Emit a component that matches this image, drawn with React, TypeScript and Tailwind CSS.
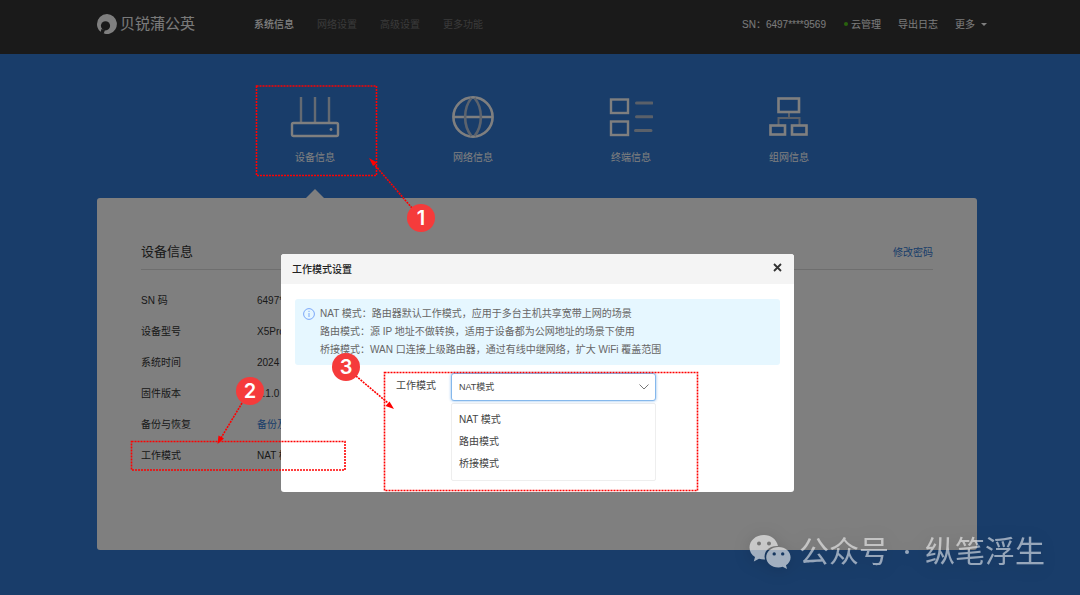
import React from "react";

const navItems = ["网络设置", "高级设置", "更多功能"];

function RouterIcon() {
  return (
    <svg width="50" height="42" viewBox="0 0 50 42" fill="none" stroke="#fff">
      <path d="M11 1v25M25 1v25M39 1v25" stroke="#c8d4e4" strokeWidth="2.4" />
      <rect x="2" y="27" width="46" height="13" rx="1.5" strokeWidth="2.4" />
      <circle cx="41" cy="33.5" r="1.4" fill="#fff" stroke="none" />
    </svg>
  );
}

function GlobeIcon() {
  return (
    <svg width="42" height="42" viewBox="0 0 42 42" fill="none" stroke="#fff" strokeWidth="2.6">
      <circle cx="21" cy="21" r="19.6" />
      <path d="M1 21h40" />
      <path d="M19.500 2C11 12 11 30 19.500 40M22.500 2C31 12 31 30 22.500 40" stroke="#b9c7db" />
    </svg>
  );
}

function TerminalIcon() {
  return (
    <svg width="44" height="42" viewBox="0 0 44 42" fill="none" stroke="#fff" strokeWidth="2.4">
      <rect x="2" y="3.500" width="17" height="13.500" />
      <rect x="2" y="25.500" width="17" height="13.500" />
      <path d="M27.500 7h15.500M27.500 20.800h15.500M26.500 34.500h15.500" strokeLinecap="round" strokeWidth="3" stroke="#b4c0d2" />
    </svg>
  );
}

function NetworkIcon() {
  return (
    <svg width="40" height="42" viewBox="0 0 40 42" fill="none" stroke="#fff" strokeWidth="2.6">
      <path d="M20 16v6M9.500 29v-7h21v7" stroke="#b4c0d2" strokeWidth="2" />
      <rect x="9.500" y="2.500" width="20.500" height="13.500" />
      <rect x="1.500" y="29.500" width="14.500" height="9" />
      <rect x="23" y="29.500" width="14.500" height="9" />
    </svg>
  );
}

const tabs = [
  { label: "设备信息", Icon: RouterIcon },
  { label: "网络信息", Icon: GlobeIcon },
  { label: "终端信息", Icon: TerminalIcon },
  { label: "组网信息", Icon: NetworkIcon },
];

const rows = [
  { label: "SN 码", value: "6497****9569" },
  { label: "设备型号", value: "X5Pro" },
  { label: "系统时间", value: "2024" },
  { label: "固件版本", value: "1.1.0" },
  { label: "备份与恢复", value: "备份及恢复", link: true },
  { label: "工作模式", value: "NAT 模式" },
];

function Header() {
  return (
    <header className="h-[54px] bg-[#343434] pr-[6px] text-[10px] text-[#f4f4f4]">
      <div className="mx-auto flex h-full max-w-[880px] items-center pb-1.5">
        <a href="#" className="flex items-center gap-[3px]">
          <svg width="20" height="20" viewBox="0 0 20 20">
            <path
              d="M10 0a10 10 0 0 1 3 19.500C10 20.500 7.500 19.800 6.500 19C8 18.700 8.200 17.500 7.200 16.400A5 5 0 1 1 13.300 11.500C13.300 15 11 17.500 7 19.500C2.500 18 0 14.500 0 10A10 10 0 0 1 10 0Z"
              fill="#fff"
            />
            <circle cx="8.500" cy="11.800" r="4.600" fill="#343434" />
            <path d="M4.500 15L3.500 18.500L6.500 20L8 16Z" fill="#343434" />
          </svg>
          <span className="text-[15px] leading-5">贝锐蒲公英</span>
        </a>
        <nav className="ml-[59px] flex gap-[23px]">
          <a href="#" className="font-medium text-white">系统信息</a>
          {navItems.map((n) => (
            <a key={n} href="#" className="text-[#747474]">{n}</a>
          ))}
        </nav>
        <div className="mr-[-10px] ml-auto flex items-center">
          <span className="mr-[18px]">SN：6497****9569</span>
          <a href="#" className="mr-[17px] flex items-center gap-[3px]">
            <span className="size-1 rounded-full bg-[#52c41a]" />
            云管理
          </a>
          <a href="#" className="mr-[17px]">导出日志</a>
          <button className="flex items-center gap-1.5">
            更多
            <span className="border-x-[3px] border-t-[3px] border-x-transparent border-t-white" />
          </button>
        </div>
      </div>
    </header>
  );
}

function Modal() {
  return (
    <div className="absolute inset-0 flex items-start justify-center bg-black/50 pt-[254px] pr-[5px]">
      <section role="dialog" aria-label="工作模式设置" className="w-[513px] overflow-hidden rounded-[3px] bg-white pb-[11px]">
        <header className="flex h-[30px] items-center justify-between bg-[#f4f4f4] px-[11px]">
          <h2 className="text-[10px] font-medium text-[#222]">工作模式设置</h2>
          <button aria-label="关闭" className="-mt-1">
            <svg width="11" height="9" viewBox="0 0 11 9" stroke="#333" strokeWidth="1.800">
              <path d="M2 1L9 8M9 1L2 8" />
            </svg>
          </button>
        </header>
        <div className="mx-[14px] mt-[15px] flex h-[66px] gap-[5px] rounded-[3px] bg-[#e6f7ff] px-2 pt-[6px] text-[10px] leading-[18px] text-[#666]">
          <svg className="mt-[3px] shrink-0" width="12" height="12" viewBox="0 0 12 12" fill="none" stroke="#7aa7f8">
            <circle cx="6" cy="6" r="5.400" />
            <path d="M6 5v4M6 2.800v1.200" />
          </svg>
          <div>
            <p>NAT 模式：路由器默认工作模式，应用于多台主机共享宽带上网的场景</p>
            <p>路由模式：源 IP 地址不做转换，适用于设备都为公网地址的场景下使用</p>
            <p>桥接模式：WAN 口连接上级路由器，通过有线中继网络，扩大 WiFi 覆盖范围</p>
          </div>
        </div>
        <div className="mt-2 flex gap-[15px] pl-[115px] text-[#444]">
          <label htmlFor="mode" className="mt-[5px] h-4 text-[10px] leading-4">工作模式</label>
          <div className="w-[205px]">
            <div className="relative">
              <select
                id="mode"
                className="block h-7 w-full appearance-none rounded-[3px] border border-[#85b8ec] bg-white px-[7px] pt-px text-[9px] shadow-[0_0_3px_#85b8ec] outline-none"
              >
                <option>NAT模式</option>
                <option>路由模式</option>
                <option>桥接模式</option>
              </select>
              <svg className="pointer-events-none absolute top-[11px] right-[7px]" width="10" height="6" viewBox="0 0 10 6" fill="none" stroke="#777">
                <path d="M0.500 0.500L5 5L9.500 0.500" />
              </svg>
            </div>
            <ul className="mt-0.5 rounded-[2px] border border-[#eee] px-[7px] py-[5px] text-[10px] leading-[22px]">
              <li>NAT 模式</li>
              <li>路由模式</li>
              <li>桥接模式</li>
            </ul>
          </div>
        </div>
      </section>
    </div>
  );
}

function Annotations() {
  const badge =
    "absolute flex size-7 items-center justify-center rounded-full bg-[#f53b3b] font-['Inter',sans-serif] text-[20px] leading-7 font-semibold text-white";
  return (
    <div className="pointer-events-none absolute inset-0">
      <svg className="absolute top-0 left-0" width="720" height="500" viewBox="0 0 720 500" fill="none" stroke="#f00" strokeWidth="1.600">
        <g strokeDasharray="2 1">
          <rect x="256.500" y="86" width="120" height="89.500" />
          <rect x="131.500" y="441.500" width="213.500" height="28.500" />
          <rect x="384.500" y="372.500" width="313" height="118" />
          <path d="M412 208L374 164M242 403L221 438M356 376L388 403" />
        </g>
        <g fill="#f00" stroke="none">
          <path d="M369 158L377 162.500L373 166Z" />
          <path d="M217.500 444L218.500 435.500L224 438.500Z" />
          <path d="M394 409L385.500 406L389.500 401.500Z" />
        </g>
      </svg>
      <span className={`${badge} top-[204px] left-[407px]`}>1</span>
      <span className={`${badge} top-[377px] left-[236px]`}>2</span>
      <span className={`${badge} top-[353px] left-[332px]`}>3</span>
      <div className="absolute right-[35px] bottom-[25px] flex items-center text-[30px] leading-9 text-white/55 drop-shadow-[0_2px_8px_rgba(0,0,0,0.25)]">
        <svg className="mr-2" width="42" height="36" viewBox="0 0 42 36">
          <path
            fillRule="evenodd"
            fill="#fff"
            fillOpacity="0.600"
            d="M15 1C6.800 1 .5 6.500 .5 13.500C.5 17.500 2.600 20.800 6 23L4.800 27.500L10 24.800C11.800 25.300 13.700 25.600 16 25.500C14 17.500 20 11.500 29 12C27.500 5.300 22 1 15 1ZM10 7.500a2 2 0 1 1 0 4a2 2 0 1 1 0-4ZM20 7.500a2 2 0 1 1 0 4a2 2 0 1 1 0-4Z"
          />
          <path
            fillRule="evenodd"
            fill="#fff"
            fillOpacity="0.600"
            d="M29.500 13C22.600 13 17.200 17.600 17.200 23.200S22.600 33.400 29.500 33.400C31 33.400 32.300 33.200 33.600 32.800L38 35L37 31.300C39.800 29.400 41.600 26.500 41.600 23.200C41.600 17.600 36.400 13 29.500 13ZM25.200 18.200a1.700 1.700 0 1 1 0 3.400a1.700 1.700 0 1 1 0-3.400ZM33.700 18.200a1.700 1.700 0 1 1 0 3.400a1.700 1.700 0 1 1 0-3.400Z"
          />
        </svg>
        <span>公众号</span>
        <span className="mx-4 size-1 rounded-full bg-white/55" />
        <span>纵笔浮生</span>
      </div>
    </div>
  );
}

export default function App() {
  return (
    <div className="relative min-h-screen overflow-hidden bg-[#327ad4] font-['Liberation_Sans','Noto_Sans_CJK_SC',sans-serif]">
      <Header />
      <main className="pr-[6px]">
        <div className="mx-auto max-w-[880px]">
          <nav className="flex pl-[139px]">
            {tabs.map(({ label, Icon }, i) => (
              <a key={label} href="#" className="relative flex h-36 w-[158px] flex-col items-center pt-[42px] text-[10px] leading-4 text-white">
                <Icon />
                <span className="mt-3">{label}</span>
                {i === 0 && (
                  <span className="absolute bottom-0 border-x-[9px] border-b-[9px] border-x-transparent border-b-white" />
                )}
              </a>
            ))}
          </nav>
          <section className="min-h-[352px] rounded-[3px] bg-white px-11 pt-11 text-[#333]">
            <div className="flex items-center justify-between border-b border-[#ddd] pb-[7px]">
              <h1 className="text-[13px] leading-5">设备信息</h1>
              <a href="#" className="text-[10px] text-[#327ad4]">修改密码</a>
            </div>
            <dl className="mt-[15px] text-[10px] leading-[31px]">
              {rows.map((r) => (
                <div key={r.label} className="flex">
                  <dt className="w-[116px]">{r.label}</dt>
                  <dd>{r.link ? <a href="#" className="text-[#327ad4]">{r.value}</a> : r.value}</dd>
                </div>
              ))}
            </dl>
          </section>
        </div>
      </main>
      <Modal />
      <Annotations />
    </div>
  );
}
